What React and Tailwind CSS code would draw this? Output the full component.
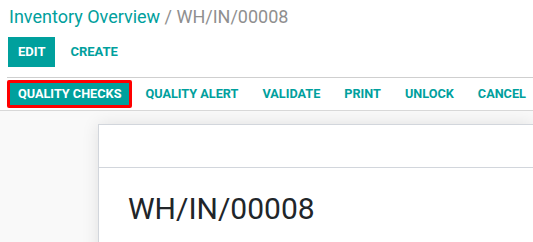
import React from "react";

export default function App() {
  return (
    <div className="w-[533px] h-[242px] overflow-hidden bg-white font-['Roboto',sans-serif] flex flex-col">
      {/* control panel */}
      <div className="shrink-0 pl-[9px] h-[30px] flex items-end">
        <div className="text-[18px] leading-[26px] whitespace-nowrap">
          <span className="text-[#00A09D]">Inventory Overview</span>
          <span className="text-[#8f8f8f]"> / WH/IN/00008</span>
        </div>
      </div>
      <div className="shrink-0 flex items-center pl-[8px] mt-[7px] h-[30px]">
        <div className="h-[30px] px-[10px] bg-[#00A09D] text-white text-[13px] font-bold flex items-center">EDIT</div>
        <div className="h-[30px] px-[10px] ml-[5px] text-[#00A09D] text-[13px] font-bold flex items-center">CREATE</div>
        <div className="ml-auto mr-[-40px] text-[13px] text-[#666] whitespace-nowrap">1 / 1</div>
      </div>
      {/* status bar */}
      <div className="shrink-0 mt-[10px] ml-[7px] h-[33px] border-t border-[#cfcfcf] flex items-center">
        <div className="border-[3px] border-[#ff0000] rounded-[2px] flex">
          <div className="h-[22px] px-[8px] bg-[#00A09D] text-white text-[12.7px] font-bold flex items-center whitespace-nowrap">QUALITY CHECKS</div>
        </div>
        <div className="flex items-center ml-[1px]">
          {["QUALITY ALERT", "VALIDATE", "PRINT", "UNLOCK", "CANCEL"].map((t) => (
            <div key={t} className="px-[12px] text-[#00A09D] text-[12.7px] font-bold whitespace-nowrap">{t}</div>
          ))}
        </div>
      </div>
      {/* sheet area */}
      <div className="flex-1 min-h-0 overflow-hidden bg-[#f9f9f9] border-t border-[#d8d8d8] pt-[13px] pl-[98px]">
        <div className="bg-white border border-[#d2d6dc] border-r-0 h-[200px] shadow-[0_0_16px_rgba(0,0,0,0.1)]">
          <div className="h-[43px] border-b border-[#d2d6dc]"></div>
          <div className="pl-[29px] pt-[23px] text-[30px] leading-[36px] text-[#212529] whitespace-nowrap">WH/IN/00008</div>
        </div>
      </div>
    </div>
  );
}
